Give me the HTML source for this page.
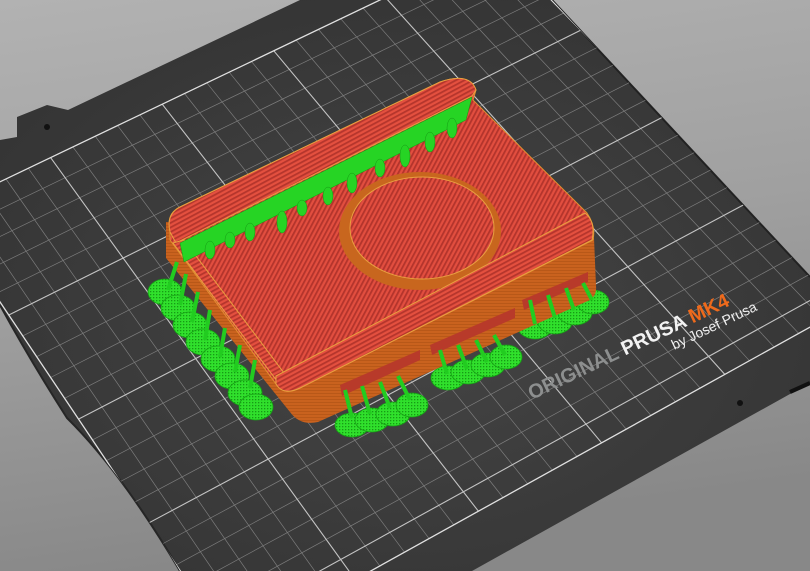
<!DOCTYPE html>
<html><head><meta charset="utf-8"><style>
html,body{margin:0;padding:0;width:810px;height:571px;overflow:hidden;background:#999}
svg{display:block;position:absolute;left:0;top:0}
</style></head><body>
<svg width="810" height="571" viewBox="0 0 810 571" xmlns="http://www.w3.org/2000/svg">
<defs>
<linearGradient id="bg" x1="0" y1="0" x2="0.2" y2="1">
<stop offset="0" stop-color="#b2b2b2"/><stop offset="0.5" stop-color="#a0a0a0"/><stop offset="1" stop-color="#888"/></linearGradient>
<radialGradient id="plate" cx="0.5" cy="0.55" r="0.65">
<stop offset="0" stop-color="#454545"/><stop offset="1" stop-color="#333"/></radialGradient>
<pattern id="str" width="4" height="4" patternUnits="userSpaceOnUse" patternTransform="rotate(-28)">
<rect width="4" height="4" fill="#e4503f"/><rect width="4" height="1.8" fill="#b5352c"/></pattern>
<pattern id="str2" width="4" height="4" patternUnits="userSpaceOnUse" patternTransform="rotate(-62)">
<rect width="4" height="4" fill="#e24e3f"/><rect width="4" height="1.8" fill="#b3342c"/></pattern>
<pattern id="wall" width="3" height="3" patternUnits="userSpaceOnUse">
<rect width="3" height="3" fill="#c9621e"/><rect width="3" height="1" fill="#b85818"/></pattern>
<pattern id="grn" width="3" height="3" patternUnits="userSpaceOnUse">
<rect width="3" height="3" fill="#30e02c"/><rect width="1.3" height="1.3" fill="#179a15"/></pattern>
<clipPath id="pc"><path d="M0 140 L17 137 L17 117 L47 105 L68 110 L300 0 L552 0 L810 277 L810 384 L790 394 L472 571 L180 571 Q120 470 67 418 Q30 360 0 305 Z"/></clipPath>
</defs>
<rect width="810" height="571" fill="url(#bg)"/>
<path d="M0 140 L17 137 L17 117 L47 105 L68 110 L300 0 L552 0 L810 277 L810 384 L790 394 L472 571 L180 571 Q120 470 67 418 Q30 360 0 305 Z" fill="url(#plate)"/>
<path d="M552 0 L810 277" stroke="#222" stroke-width="2"/>
<path d="M0 305 Q30 360 67 418 Q120 470 180 571" stroke="#262626" stroke-width="2" fill="none"/>
<g clip-path="url(#pc)" fill="none">
<g stroke="#8e8e8e" stroke-width="0.7" opacity="0.8">
<path d="M-38.7 200.3L256.6 634.3M-16.4 189.6L281.3 620.6M6 179L305.9 607M28.3 168.3L330.6 593.3M72.9 146.9L379.8 565.9M95.2 136.2L404.5 552.2M117.6 125.6L429.1 538.6M139.9 114.9L453.8 524.9M184.5 93.5L503 497.5M206.8 82.8L527.7 483.8M229.2 72.2L552.3 470.2M251.5 61.5L577 456.5M296.1 40.1L626.2 429.1M318.4 29.4L650.9 415.4M340.8 18.8L675.5 401.8M363.1 8.1L700.2 388.1M407.7 -13.3L749.4 360.7M430 -24L774.1 347M452.4 -34.6L798.7 333.4M474.7 -45.3L823.4 319.7"/>
<path d="M-47 231.8L513.7 -38.8M-33.1 252.6L530.4 -21.5M-19.1 273.4L547.1 -4.3M-5.2 294.2L563.8 13M22.7 335.9L597.3 47.4M36.7 356.7L614 64.7M50.6 377.5L630.7 81.9M64.6 398.3L647.4 99.2M92.5 439.9L680.8 133.6M106.4 460.7L697.5 150.9M120.4 481.5L714.2 168.1M134.3 502.3L730.9 185.4M162.2 544L764.4 219.8M176.2 564.8L781.1 237.1M190.1 585.6L797.8 254.3M204.1 606.4L814.5 271.6"/>
</g>
<g stroke="#c4c4c4" stroke-width="1.1">
<path d="M50.6 157.6L355.2 579.6M162.2 104.2L478.4 511.2M273.8 50.8L601.6 442.8M385.4 -2.6L724.8 374.4"/>
<path d="M8.8 315L580.6 30.2M78.5 419.1L664.1 116.4M148.3 523.2L747.7 202.6M218 627.2L831.2 288.8"/>
</g>
<g stroke="#e0e0e0" stroke-width="1.3">
<path d="M-61 211L497 -56M-61 211L232 648M232 648L848 306M497 -56L848 306"/>
</g>
</g>
<circle cx="47" cy="127" r="3" fill="#111"/>
<circle cx="740" cy="403" r="3" fill="#111"/>
<path d="M790 392 L810 383" stroke="#111" stroke-width="4"/>
<g font-family="Liberation Sans, sans-serif" font-weight="bold" transform="translate(532,400) rotate(-25.5)">
<text x="0" y="0" font-size="20" fill="#8d8f8f">ORIGINAL <tspan fill="#f2f2f2">PRUSA</tspan> <tspan fill="#ee6a1c">MK4</tspan></text>
<text x="150" y="16" font-size="14" font-weight="normal" fill="#f0f0f0">by Josef Prusa</text>
</g>
<g fill="url(#grn)" stroke="#16a014" stroke-width="0.8">
<ellipse cx="165" cy="292" rx="17" ry="13"/><ellipse cx="178" cy="308" rx="17" ry="13"/><ellipse cx="190" cy="325" rx="17" ry="13"/>
<ellipse cx="203" cy="342" rx="17" ry="13"/><ellipse cx="218" cy="359" rx="17" ry="13"/><ellipse cx="232" cy="376" rx="17" ry="13"/>
<ellipse cx="245" cy="393" rx="17" ry="13"/><ellipse cx="256" cy="407" rx="17" ry="13"/>
<ellipse cx="352" cy="425" rx="17" ry="12"/><ellipse cx="372" cy="420" rx="17" ry="12"/><ellipse cx="393" cy="414" rx="17" ry="12"/><ellipse cx="412" cy="405" rx="16" ry="12"/>
<ellipse cx="448" cy="378" rx="17" ry="12"/><ellipse cx="468" cy="372" rx="17" ry="12"/><ellipse cx="488" cy="365" rx="17" ry="12"/><ellipse cx="506" cy="357" rx="16" ry="12"/>
<ellipse cx="535" cy="327" rx="17" ry="12"/><ellipse cx="555" cy="322" rx="17" ry="12"/><ellipse cx="575" cy="313" rx="17" ry="12"/><ellipse cx="593" cy="302" rx="16" ry="12"/>
</g>
<path d="M166 222 L166 258 L290 412 Q300 426 318 422 L590 300 Q597 295 596 286 L594 238 Z" fill="url(#wall)"/>
<g fill="#b83a2a"><path d="M340 385 L420 350 L420 360 L342 396Z"/><path d="M430 345 L515 308 L515 318 L432 355Z"/><path d="M522 300 L588 272 L588 282 L524 310Z"/></g>
<g stroke="#22cc20" stroke-width="4">
<path d="M177 262 L168 290 M186 274 L180 305 M198 292 L192 322 M210 310 L205 340 M225 328 L220 357 M240 345 L235 372 M255 360 L250 388"/>
<path d="M345 390 L352 418 M362 386 L370 414 M380 382 L390 408 M398 376 L410 400"/>
<path d="M440 350 L447 374 M458 345 L467 369 M476 340 L487 362 M494 335 L505 355"/>
<path d="M530 300 L535 324 M548 295 L555 318 M566 288 L574 310 M583 283 L592 300"/>
</g>
<path d="M170 230 Q166 214 180 207 L440 82 Q470 72 476 90 L473 100 L587 213 Q596 226 593 240 L300 388 Q284 396 276 384 L170 240 Z" fill="url(#str2)" stroke="#e09030" stroke-width="1"/>
<ellipse cx="420" cy="231" rx="81" ry="59" fill="#c8661e"/>
<ellipse cx="422" cy="228" rx="72" ry="51" fill="url(#str2)" stroke="#e8a040" stroke-width="1"/>
<path d="M170 232 Q166 214 180 207 L440 82 Q470 72 476 90 L472 96 L176 243 Z" fill="url(#str)" stroke="#e8a040" stroke-width="1"/>
<path d="M173 243 L184 240 L284 373 L280 385 Z" fill="url(#str)" stroke="#e8a040" stroke-width="1"/>
<path d="M276 376 L585 213 Q596 222 592 240 L300 388 Q283 396 276 384 Z" fill="url(#str)" stroke="#e8a040" stroke-width="1"/>
<g fill="#26d424" stroke="#159a14" stroke-width="0.5">
<path d="M180 243 L472 97 L466 120 L184 262 Z"/>
<ellipse cx="210" cy="250" rx="5" ry="9"/><ellipse cx="230" cy="240" rx="5" ry="8"/><ellipse cx="250" cy="232" rx="5" ry="9"/>
<ellipse cx="282" cy="222" rx="5" ry="11"/><ellipse cx="302" cy="208" rx="5" ry="8"/><ellipse cx="328" cy="196" rx="5" ry="9"/>
<ellipse cx="352" cy="183" rx="5" ry="10"/><ellipse cx="380" cy="168" rx="5" ry="9"/><ellipse cx="405" cy="156" rx="5" ry="11"/>
<ellipse cx="430" cy="142" rx="5" ry="10"/><ellipse cx="452" cy="128" rx="5" ry="10"/>
</g>
</svg>
</body></html>
